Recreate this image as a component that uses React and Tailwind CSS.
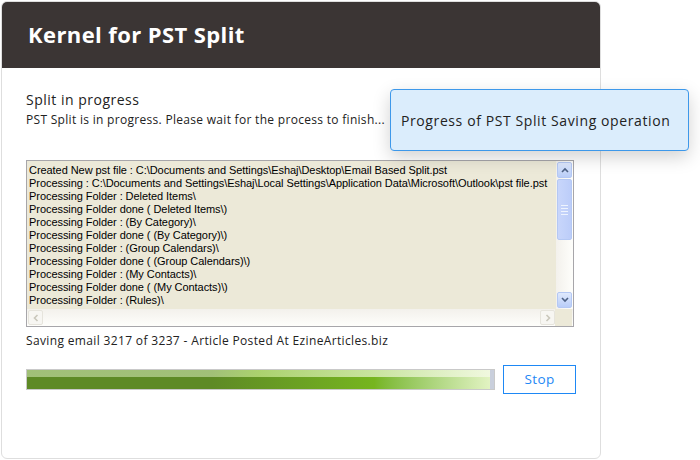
import React from "react";

const logLines = [
  "Created New pst file : C:\\Documents and Settings\\Eshaj\\Desktop\\Email Based Split.pst",
  "Processing : C:\\Documents and Settings\\Eshaj\\Local Settings\\Application Data\\Microsoft\\Outlook\\pst file.pst",
  "Processing Folder : Deleted Items\\",
  "Processing Folder done ( Deleted Items\\)",
  "Processing Folder : (By Category)\\",
  "Processing Folder done ( (By Category)\\)",
  "Processing Folder : (Group Calendars)\\",
  "Processing Folder done ( (Group Calendars)\\)",
  "Processing Folder : (My Contacts)\\",
  "Processing Folder done ( (My Contacts)\\)",
  "Processing Folder : (Rules)\\",
];

const ArrowBtn = ({ dir }) => (
  <div className="w-[15px] h-[16px] rounded-[2px] border border-[#b4c8f4] bg-gradient-to-b from-[#dfe9fd] to-[#b9cdf8] flex items-center justify-center">
    <svg width="8" height="6" viewBox="0 0 8 6">
      <path
        d={dir === "up" ? "M1 5 L4 2 L7 5" : "M1 1 L4 4 L7 1"}
        fill="none"
        stroke="#4d6185"
        strokeWidth="1.6"
      />
    </svg>
  </div>
);

const HArrow = ({ dir }) => (
  <div className="w-[15px] h-[15px] border border-[#e6e4dc] rounded-[2px] bg-[#f7f6f2] flex items-center justify-center">
    <svg width="6" height="8" viewBox="0 0 6 8">
      <path
        d={dir === "left" ? "M4.5 1 L1.5 4 L4.5 7" : "M1.5 1 L4.5 4 L1.5 7"}
        fill="none"
        stroke="#c9c7bb"
        strokeWidth="1.6"
      />
    </svg>
  </div>
);

const LogBox = () => (
  <div className="mt-[31px] w-[548px] h-[167px] border border-[#a7a6aa] bg-[#ece9d8] flex flex-col">
    <div className="flex flex-1 min-h-0">
      <div
        className="flex-1 pl-[2px] pt-[3px] overflow-hidden text-[11px] leading-[13px] tracking-[-0.06px] text-black whitespace-nowrap"
        style={{ fontFamily: '"Liberation Sans", Arial, sans-serif' }}
      >
        {logLines.map((l, i) => (
          <div key={i}>{l}</div>
        ))}
      </div>
      <div className="w-[17px] bg-gradient-to-r from-[#f3f1ec] to-[#fefefb] flex flex-col items-center pt-[1px] pb-[1px]">
        <ArrowBtn dir="up" />
        <div className="mt-[1px] w-[15px] h-[61px] rounded-[2px] border border-[#b4c8f4] bg-gradient-to-r from-[#c8d6fb] to-[#bccdf9] flex items-center justify-center">
          <div className="flex flex-col gap-[2px]">
            <div className="w-[7px] h-[1px] bg-[#eef4fe]" />
            <div className="w-[7px] h-[1px] bg-[#eef4fe]" />
            <div className="w-[7px] h-[1px] bg-[#eef4fe]" />
            <div className="w-[7px] h-[1px] bg-[#eef4fe]" />
          </div>
        </div>
        <div className="flex-1" />
        <ArrowBtn dir="down" />
      </div>
    </div>
    <div className="h-[17px] flex items-center px-[1px] bg-gradient-to-b from-[#f3f1ec] to-[#fefefb]">
      <HArrow dir="left" />
      <div className="flex-1" />
      <HArrow dir="right" />
      <div className="w-[17px] h-[17px] bg-[#ece9d8]" />
    </div>
  </div>
);

export default function App() {
  return (
    <div
      className="w-[700px] h-[460px] bg-white relative overflow-hidden"
      style={{ fontFamily: '"Open Sans", "Noto Sans", sans-serif' }}
    >
      <div className="ml-[1px] mt-[1px] w-[600px] h-[458px] border border-[#dedede] rounded-[6px] flex flex-col">
        <div className="h-[66px] bg-[#3b3534] rounded-t-[5px] flex items-center pl-[26px] pb-[2px]">
          <h1 className="text-white text-[22px] font-bold tracking-[0.4px]">Kernel for PST Split</h1>
        </div>
        <div className="pl-[24px] pt-[22px] flex flex-col">
          <div className="text-[14px] text-[#222] leading-[20px] tracking-[0.5px]">Split in progress</div>
          <div className="text-[12px] text-[#222] leading-[18px] mt-[1px] tracking-[0.3px]">
            PST Split is in progress. Please wait for the process to finish...
          </div>
          <LogBox />
          <div className="mt-[5px] text-[12px] text-[#222] leading-[18px] tracking-[0.35px]">
            Saving email 3217 of 3237 - Article Posted At EzineArticles.biz
          </div>
          <div className="mt-[15px] flex items-center gap-[8px]">
            <div className="w-[469px] h-[21px] border border-[#c9c9c9] bg-[#c9cfdc] flex">
              <div className="w-[463px] h-full relative overflow-hidden">
                <div className="absolute inset-0 bg-gradient-to-r from-[#5e8a25] from-40% via-[#76b51f] via-75% to-[#e2f3c2]" />
                <div className="absolute inset-x-0 top-0 h-[7px] bg-gradient-to-r from-[#a9c681] from-40% via-[#b3d876] to-[#f2f9e2] opacity-90" />
              </div>
            </div>
            <button className="w-[73px] h-[29px] border border-[#1e88f5] text-[#1e88f5] text-[13.5px] tracking-[0.4px] bg-white">
              Stop
            </button>
          </div>
        </div>
      </div>
      <div className="absolute left-[390px] top-[89px] w-[299px] h-[62px] bg-[#dbedfc] border border-[#3d98ea] rounded-[4px] shadow-[0_6px_18px_rgba(0,0,0,0.18)] flex items-center pl-[10px]">
        <span className="text-[14px] text-[#222] tracking-[0.6px]">Progress of PST Split Saving operation</span>
      </div>
    </div>
  );
}
